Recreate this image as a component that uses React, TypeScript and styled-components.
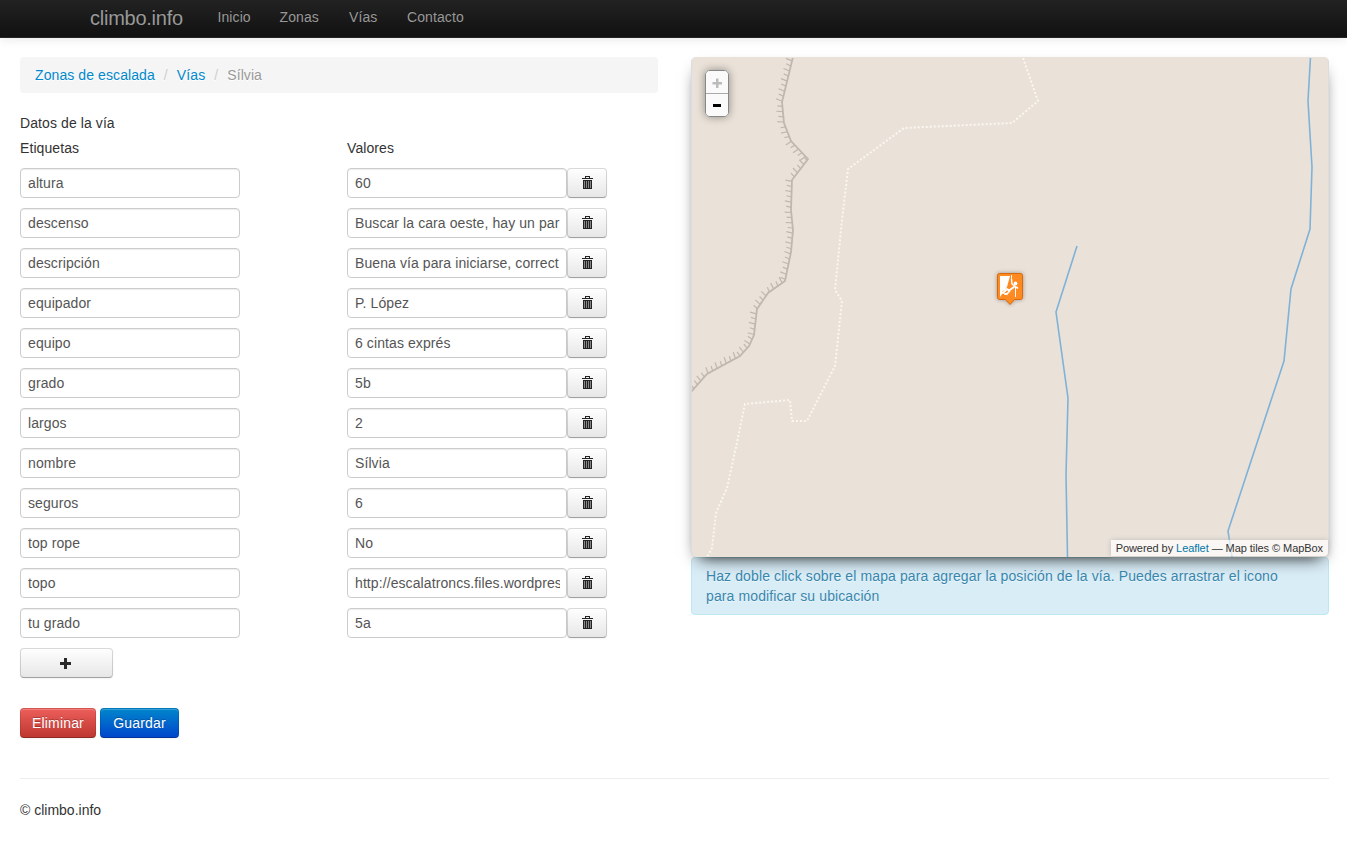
import React from "react";
import styled, { createGlobalStyle, css } from "styled-components";

const GlobalStyle = createGlobalStyle`
  *, *::before, *::after { box-sizing: border-box; }
  body {
    margin: 0;
    background: #fff;
    color: #333;
    font: 14px/20px "Liberation Sans", Arial, sans-serif;
    letter-spacing: 0.09px;
  }
`;

const Navbar = styled.header`
  position: relative;
  display: flex;
  height: 38px;
  padding-left: 70px;
  background: linear-gradient(#222, #111);
  border-bottom: 1px solid #252525;
  box-shadow: 0 1px 10px rgba(0, 0, 0, 0.1);
`;

const Brand = styled.a`
  width: 132.5px;
  padding: 8px 0 0 20px;
  color: #999;
  font-size: 20px;
  font-weight: 200;
  letter-spacing: -0.25px;
  text-shadow: 0 -1px 0 rgba(0, 0, 0, 0.25);
`;

const NavLink = styled.a<{ $width: number }>`
  width: ${(p) => p.$width}px;
  padding: 7px 0 0 15px;
  color: #999;
  text-shadow: 0 -1px 0 rgba(0, 0, 0, 0.25);
`;

const Page = styled.div`
  padding: 19px 18px 0 20px;
`;

const Columns = styled.div`
  display: flex;
  justify-content: space-between;
`;

const FormColumn = styled.main`
  width: 638px;
`;

const MapColumn = styled.section`
  width: 638px;
`;

const Breadcrumb = styled.nav`
  display: flex;
  height: 36px;
  margin-bottom: 20px;
  padding: 8px 15px;
  background: #f5f5f5;
  border-radius: 4px;
  color: #999;
  text-shadow: 0 1px 0 #fff;
`;

const Link = styled.a`
  color: #08c;
`;

const Divider = styled.span`
  width: 22px;
  color: #ccc;
  text-align: center;
`;

const FormTitle = styled.div`
  margin-bottom: 5px;
`;

const FieldRow = styled.div`
  display: grid;
  grid-template-columns: 327px 220px 40px;
  margin-bottom: 10px;
`;

const TextInput = styled.input`
  width: 220px;
  height: 30px;
  padding: 4px 6px 4px 7px;
  border: 1px solid #ccc;
  border-radius: 4px;
  background: #fff;
  box-shadow: inset 0 1px 1px rgba(0, 0, 0, 0.075);
  color: #555;
  font: inherit;
  letter-spacing: inherit;
`;

const variants = {
  plain: css`
    color: #333;
    background: linear-gradient(#fff, #e6e6e6);
    border-color: rgba(0, 0, 0, 0.15) rgba(0, 0, 0, 0.15) rgba(0, 0, 0, 0.3);
    text-shadow: 0 1px 1px rgba(255, 255, 255, 0.75);
  `,
  danger: css`
    color: #fff;
    background: linear-gradient(#ee5f5b, #bd362f);
    border-color: rgba(0, 0, 0, 0.1) rgba(0, 0, 0, 0.1) rgba(0, 0, 0, 0.25);
    text-shadow: 0 -1px 0 rgba(0, 0, 0, 0.25);
  `,
  primary: css`
    color: #fff;
    background: linear-gradient(#08c, #04c);
    border-color: rgba(0, 0, 0, 0.1) rgba(0, 0, 0, 0.1) rgba(0, 0, 0, 0.25);
    text-shadow: 0 -1px 0 rgba(0, 0, 0, 0.25);
  `,
};

const Button = styled.button<{ $variant: keyof typeof variants; $width: number }>`
  display: flex;
  align-items: center;
  justify-content: center;
  width: ${(p) => p.$width}px;
  height: 30px;
  padding: 0;
  border: 1px solid;
  border-radius: 4px;
  background-origin: border-box !important;
  box-shadow: inset 0 1px 0 rgba(255, 255, 255, 0.2), 0 1px 2px rgba(0, 0, 0, 0.05);
  font: inherit;
  letter-spacing: 0.15px;
  ${(p) => variants[p.$variant]}
`;

const Actions = styled.div`
  display: flex;
  gap: 4px;
  margin-top: 30px;
`;

const MapFrame = styled.div`
  position: relative;
  height: 500px;
  border: 1px solid #dcdcdf;
  border-top-color: #eae2d9;
  border-bottom-width: 0;
  border-radius: 5px;
  background: #eae2d9;
  box-shadow: 0 8px 16px -8px #000;
`;

const MapDrawing = styled.svg`
  display: block;
  width: 636px;
  height: 499px;
  border-radius: 4px;
`;

const ZoomControl = styled.div`
  position: absolute;
  top: 12px;
  left: 13px;
  width: 24px;
  border: 1px solid #888;
  border-radius: 5px;
  background: rgba(255, 255, 255, 0.8);
  box-shadow: 0 0 8px rgba(0, 0, 0, 0.4);
  overflow: hidden;
`;

const ZoomButton = styled.button<{ $disabled?: boolean }>`
  display: flex;
  align-items: center;
  justify-content: center;
  width: 22px;
  height: ${(p) => (p.$disabled ? 23 : 22)}px;
  padding: ${(p) => (p.$disabled ? "2px 0 0" : "0")};
  border: 0;
  border-bottom: ${(p) => (p.$disabled ? "1px solid #aaa" : "0")};
  background: rgba(250, 250, 250, 0.8);
  color: ${(p) => (p.$disabled ? "#bbb" : "#000")};
`;

const Attribution = styled.div`
  position: absolute;
  right: 0;
  bottom: 1px;
  height: 16px;
  padding: 0 5px;
  background: rgba(255, 255, 255, 0.7);
  box-shadow: 0 0 5px #bbb;
  border-bottom-right-radius: 4px;
  color: #333;
  font-size: 11px;
  line-height: 16px;
  letter-spacing: -0.065px;
  white-space: nowrap;
`;

const AttributionLink = styled.a`
  color: #0078a8;
`;

const Pin = styled.svg`
  position: absolute;
  top: 212px;
  left: 302px;
  filter: drop-shadow(0 0 2px rgba(0, 0, 0, 0.35));
`;

const Notice = styled.p`
  height: 58px;
  margin: 0;
  padding: 8px 35px 8px 14px;
  border: 1px solid #bce8f1;
  border-radius: 4px;
  background: #d9edf7;
  color: #3a87ad;
  letter-spacing: 0.11px;
  text-shadow: 0 1px 0 rgba(255, 255, 255, 0.5);
`;

const Footer = styled.footer`
  margin-top: 40px;
  padding-top: 21px;
  border-top: 1px solid #eee;
  letter-spacing: 0;
`;

type Point = [number, number];

const cliff: Point[] = [
  [793, 57], [782, 102], [784, 123], [791, 141], [808, 159], [792, 180],
  [791, 210], [793, 230], [791, 252], [785, 281], [768, 293], [757, 309],
  [754, 335], [749, 346], [740, 356], [707, 374], [691, 392],
];

const path: Point[] = [
  [1023, 58], [1038, 101], [1012, 123], [904, 128], [848, 169], [842, 220],
  [835, 290], [842, 301], [835, 366], [807, 421], [792, 421], [790, 400],
  [745, 404], [736, 447], [727, 488], [716, 513], [712, 548], [707, 557],
];

const streams: Point[][] = [
  [[1077, 246], [1056, 312], [1068, 398], [1066, 475], [1067.5, 557]],
  [[1310.5, 57], [1308, 101], [1312, 167], [1310, 229], [1291, 289], [1284, 361], [1228, 531], [1232, 557]],
];

const toPoints = (line: Point[]) => line.map((p) => p.join(",")).join(" ");

// Short hatch marks on the downhill side of the cliff edge.
function hatches(line: Point[], step: number): string {
  let d = "";
  let carry = 4;
  let n = 0;
  for (let i = 1; i < line.length; i++) {
    const [x1, y1] = line[i - 1];
    const [x2, y2] = line[i];
    const length = Math.hypot(x2 - x1, y2 - y1);
    const ux = (x2 - x1) / length;
    const uy = (y2 - y1) / length;
    let at = carry;
    for (; at < length; at += step) {
      const size = n++ % 2 ? 5 : 6.5;
      d += `M${x1 + ux * at} ${y1 + uy * at}l${(-uy * size - ux).toFixed(2)} ${(ux * size - uy).toFixed(2)}`;
    }
    carry = at - length;
  }
  return d;
}

const TrashIcon = () => (
  <svg width="12" height="14" viewBox="0 0 12 14" shapeRendering="crispEdges">
    <path fill="#222" d="M4 0h5v2H8V1H5v1H4zM1 2h11v1H1z" />
    <path fill="#888" d="M2 4h9v9H2z" />
    <path fill="#222" d="M2 4h9v1H2zM2 4h1v9H2zM4 4h1v8H4zM6 4h1v8H6zM8 4h1v8H8zM10 4h1v9h-1zM2 12h9v1H2z" />
  </svg>
);

const PlusGlyph = styled.svg`
  margin: 1px 2px 0 0;
`;

const PlusIcon = () => (
  <PlusGlyph width="11" height="11" viewBox="0 0 11 11">
    <path fill="#2b2b2b" d="M4 0h3v4h4v3H7v4H4V7H0V4h4z" />
  </PlusGlyph>
);

const ClimberPin = () => (
  <Pin width="32" height="38" viewBox="0 0 32 38">
    <path
      d="M5.500 3.500h21q2 0 2 2v22q0 2-2 2h-6l-4.500 5-4.500-5h-6q-2 0-2-2v-22q0-2 2-2z"
      fill="#ff8a22"
      stroke="#d96a0b"
    />
    <path fill="#fff" d="M6 6h10l-3 11-7 10z" />
    <path d="M19.500 17l-5 4.500-5.500 1.500" fill="none" stroke="#ff8a22" strokeWidth="4" />
    <circle cx="21.500" cy="13.500" r="1.900" fill="#fff" />
    <g fill="none" stroke="#fff" strokeLinecap="round" strokeLinejoin="round">
      <path d="M17.500 5.500v5.500" strokeWidth="1" />
      <path d="M17.500 9.500l.5 4.500 3 2.500 2.500 1.500" strokeWidth="1.500" />
      <path d="M20 17l-5 3.500-2-1.500-4 4M15.500 21l-2.500 3h-2" strokeWidth="1.900" />
      <path d="M21.500 17v9.500" strokeWidth="1" />
    </g>
  </Pin>
);

const fields = [
  ["altura", "60"],
  ["descenso", "Buscar la cara oeste, hay un par"],
  ["descripción", "Buena vía para iniciarse, correct"],
  ["equipador", "P. López"],
  ["equipo", "6 cintas exprés"],
  ["grado", "5b"],
  ["largos", "2"],
  ["nombre", "Sílvia"],
  ["seguros", "6"],
  ["top rope", "No"],
  ["topo", "http://escalatroncs.files.wordpres"],
  ["tu grado", "5a"],
];

export default function App() {
  return (
    <>
      <GlobalStyle />
      <Navbar>
        <Brand>climbo.info</Brand>
        <NavLink $width={62}>Inicio</NavLink>
        <NavLink $width={69.5}>Zonas</NavLink>
        <NavLink $width={58}>Vías</NavLink>
        <NavLink $width={90}>Contacto</NavLink>
      </Navbar>
      <Page>
        <Columns>
          <FormColumn>
            <Breadcrumb>
              <Link>Zonas de escalada</Link>
              <Divider>/</Divider>
              <Link>Vías</Link>
              <Divider>/</Divider>
              <span>Sílvia</span>
            </Breadcrumb>
            <FormTitle>Datos de la vía</FormTitle>
            <FieldRow>
              <span>Etiquetas</span>
              <span>Valores</span>
            </FieldRow>
            {fields.map(([label, value]) => (
              <FieldRow key={label}>
                <TextInput defaultValue={label} />
                <TextInput defaultValue={value} />
                <Button $variant="plain" $width={40} aria-label="Eliminar etiqueta">
                  <TrashIcon />
                </Button>
              </FieldRow>
            ))}
            <Button $variant="plain" $width={93} aria-label="Agregar etiqueta">
              <PlusIcon />
            </Button>
            <Actions>
              <Button $variant="danger" $width={76}>Eliminar</Button>
              <Button $variant="primary" $width={79}>Guardar</Button>
            </Actions>
          </FormColumn>
          <MapColumn>
            <MapFrame>
              <MapDrawing viewBox="692 58 636 499">
                <g fill="none" stroke="#c0b7ae">
                  <polyline points={toPoints(cliff)} strokeWidth="1.800" />
                  <path d={hatches(cliff, 5.2)} strokeWidth="1.200" />
                </g>
                <polyline points={toPoints(path)} fill="none" stroke="#faf7f1" strokeWidth="2" strokeDasharray="2 2" />
                {streams.map((stream, i) => (
                  <polyline key={i} points={toPoints(stream)} fill="none" stroke="#7fb2d8" strokeWidth="1.600" />
                ))}
              </MapDrawing>
              <ClimberPin />
              <ZoomControl>
                <ZoomButton $disabled aria-label="Acercar">
                  <svg width="10" height="10" viewBox="0 0 10 10">
                    <path fill="currentColor" d="M4 .5h2.500V4H10v2.500H6.500V10H4V6.500H.5V4H4z" />
                  </svg>
                </ZoomButton>
                <ZoomButton aria-label="Alejar">
                  <svg width="8" height="3" viewBox="0 0 8 3">
                    <path fill="currentColor" d="M0 0h8v3H0z" />
                  </svg>
                </ZoomButton>
              </ZoomControl>
              <Attribution>
                Powered by <AttributionLink>Leaflet</AttributionLink> — Map tiles © MapBox
              </Attribution>
            </MapFrame>
            <Notice>
              Haz doble click sobre el mapa para agregar la posición de la vía. Puedes arrastrar el icono para
              modificar su ubicación
            </Notice>
          </MapColumn>
        </Columns>
        <Footer>© climbo.info</Footer>
      </Page>
    </>
  );
}
